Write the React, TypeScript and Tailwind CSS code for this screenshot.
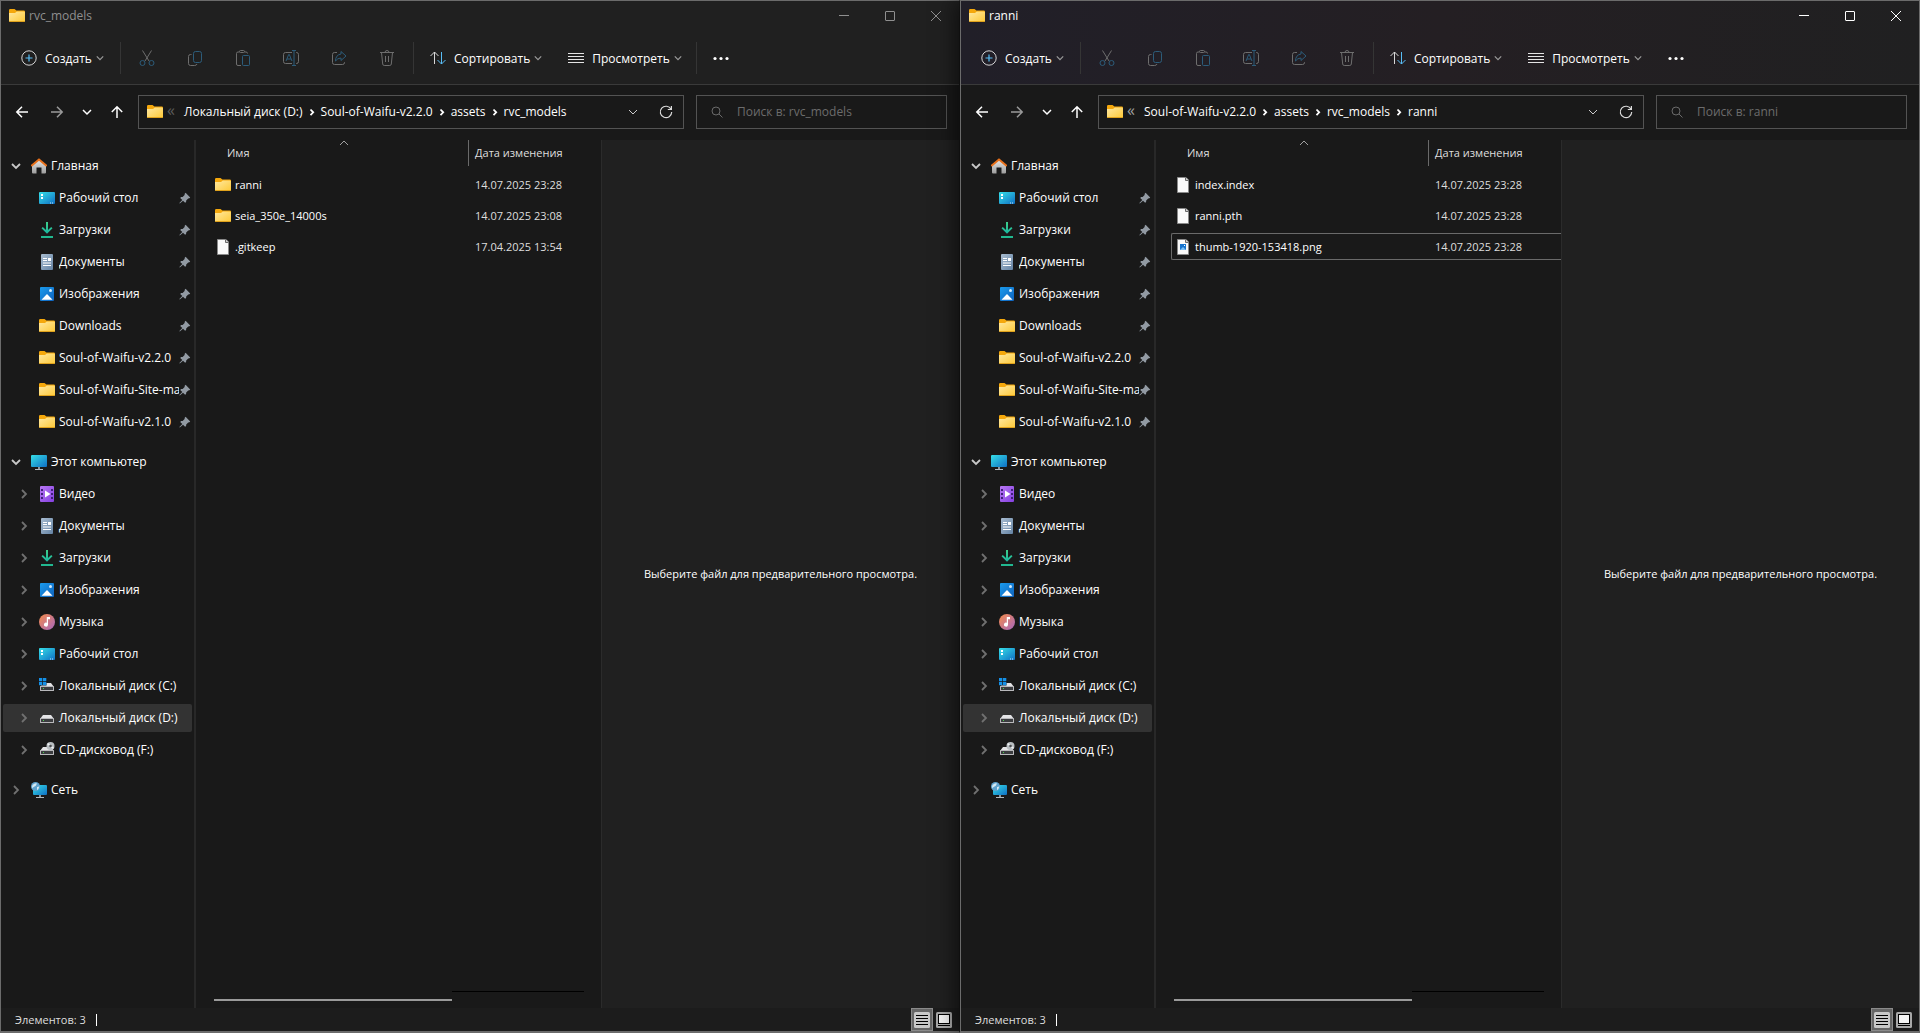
import React from 'react';

interface IconProps {
  className?: string;
}

interface FileEntry {
  name: string;
  date: string;
  kind: 'folder' | 'file' | 'image';
  focused?: boolean;
}

interface NavEntry {
  label: string;
  icon: React.FC<IconProps>;
  selected?: boolean;
}

interface ExplorerProps {
  id: string;
  title: string;
  path: string[];
  files: FileEntry[];
  active?: boolean;
}

// Shared gradients, referenced by the icons below
const IconDefs: React.FC = () => (
  <svg className="absolute h-0 w-0" aria-hidden="true">
    <defs>
      <linearGradient id="g-folder" x1="0" y1="0" x2="1" y2="1">
        <stop offset="0" stopColor="#ffe9a2" />
        <stop offset="1" stopColor="#fdc937" />
      </linearGradient>
      <linearGradient id="g-screen" x1="0" y1="0" x2="1" y2="1">
        <stop offset="0" stopColor="#36dfe8" />
        <stop offset="1" stopColor="#0f6fc4" />
      </linearGradient>
      <linearGradient id="g-home" x1="0" y1="0" x2="0" y2="1">
        <stop offset="0" stopColor="#e8e8e8" />
        <stop offset="1" stopColor="#9c9c9c" />
      </linearGradient>
      <linearGradient id="g-down" x1="0" y1="0" x2="0" y2="1">
        <stop offset="0" stopColor="#3fd08a" />
        <stop offset="1" stopColor="#17b3a0" />
      </linearGradient>
      <linearGradient id="g-doc" x1="0" y1="0" x2="1" y2="1">
        <stop offset="0" stopColor="#a9bdd1" />
        <stop offset="1" stopColor="#6483a4" />
      </linearGradient>
      <linearGradient id="g-image" x1="0" y1="0" x2="1" y2="1">
        <stop offset="0" stopColor="#1a9bee" />
        <stop offset="1" stopColor="#0f62bd" />
      </linearGradient>
      <linearGradient id="g-video" x1="0" y1="0" x2="1" y2="1">
        <stop offset="0" stopColor="#b877f5" />
        <stop offset="1" stopColor="#8440e0" />
      </linearGradient>
      <linearGradient id="g-music" x1="0" y1="0" x2="1" y2="1">
        <stop offset="0" stopColor="#f58c4a" />
        <stop offset="1" stopColor="#a566c0" />
      </linearGradient>
    </defs>
  </svg>
);

const FolderIcon: React.FC<IconProps> = ({ className }) => (
  <svg viewBox="0 0 16 16" className={`h-4 w-4 shrink-0 ${className || ''}`}>
    <path d="M0 2.2Q0 1 1.2 1h4.3L7.4 2.4h7.4Q16 2.4 16 3.6V8H0z" fill="#f5a80c" />
    <path d="M0 5h6l1.8-1.6h7Q16 3.400 16 4.600v8.200q0 1.200-1.200 1.200H1.200Q0 14 0 12.800z" fill="url(#g-folder)" />
    <path d="M.3 13.500h15.400" stroke="#e0a21c" strokeWidth="1" />
  </svg>
);

const HomeIcon: React.FC<IconProps> = () => (
  <svg viewBox="0 0 16 16" className="h-4 w-4 shrink-0">
    <path d="M1 7l7-5.500L15 7v7.500q0 1-1 1h-3.500V9.500h-5v6H2q-1 0-1-1z" fill="url(#g-home)" />
    <path d="M.8 7.400L8 1.400l7.200 6" stroke="#e8701a" strokeWidth="2" fill="none" strokeLinecap="round" strokeLinejoin="round" />
  </svg>
);

const DesktopIcon: React.FC<IconProps> = () => (
  <svg viewBox="0 0 16 16" className="h-4 w-4 shrink-0">
    <rect x="0" y="2" width="16" height="12" rx="1" fill="url(#g-screen)" />
    <path d="M2 4h2v2H2zM2 7h2v2H2z" fill="#fff" />
    <path d="M11 12.500h1v1h-1zM13 12.500h1v1h-1z" fill="#c9e6fa" />
  </svg>
);

const DownloadIcon: React.FC<IconProps> = () => (
  <svg viewBox="0 0 16 16" className="h-4 w-4 shrink-0">
    <path d="M7 0h2v8l3.200-3 1.300 1.300L8 11.800 2.500 6.300 3.800 5 7 8z" fill="url(#g-down)" />
    <path d="M2 14h12v2H2z" fill="#21b890" />
  </svg>
);

const DocumentIcon: React.FC<IconProps> = () => (
  <svg viewBox="0 0 16 16" className="h-4 w-4 shrink-0">
    <rect x="2" y="0" width="12" height="16" rx="1" fill="url(#g-doc)" />
    <path d="M4 4.500h4M4 6.500h4M4 9h8M4 11.500h8" stroke="#fff" />
    <path d="M9 4h3v3H9z" fill="#fff" />
  </svg>
);

const PicturesIcon: React.FC<IconProps> = () => (
  <svg viewBox="0 0 16 16" className="h-4 w-4 shrink-0">
    <rect x="1" y="1" width="14" height="14" rx="1" fill="url(#g-image)" />
    <path d="M2.500 13.800L8 8l5.500 5.800z" fill="#fff" />
    <circle cx="11.500" cy="4.500" r="1.500" fill="#d5ebfb" />
  </svg>
);

const MonitorIcon: React.FC<IconProps> = () => (
  <svg viewBox="0 0 16 16" className="h-4 w-4 shrink-0">
    <rect x="0" y="1" width="16" height="12" rx="1" fill="url(#g-screen)" />
    <path d="M7 13h2v2H7z" fill="#8b9299" />
    <path d="M4 15h8v1H4z" fill="#b4babf" />
  </svg>
);

const VideoIcon: React.FC<IconProps> = () => (
  <svg viewBox="0 0 16 16" className="h-4 w-4 shrink-0">
    <rect x="1" y="0" width="14" height="16" rx="1" fill="url(#g-video)" />
    <path d="M2 3h2v2H2zM2 7h2v2H2zM2 11h2v2H2zM12 3h2v2h-2zM12 7h2v2h-2zM12 11h2v2h-2z" fill="#40207a" />
    <path d="M6 4.500L11.500 8 6 11.500z" fill="#fff" />
  </svg>
);

const MusicIcon: React.FC<IconProps> = () => (
  <svg viewBox="0 0 16 16" className="h-4 w-4 shrink-0">
    <circle cx="8" cy="8" r="8" fill="url(#g-music)" />
    <path d="M7.800 3H11v2.300H9v5.400a2 2 0 1 1-1.200-1.900z" fill="#fff" />
  </svg>
);

const DriveBody: React.FC = () => (
  <>
    <path d="M4 5h8l3 4H1z" fill="#e4e4e6" />
    <rect x="1" y="8" width="14" height="5" rx=".6" fill="#b9b9bc" />
    <rect x="2" y="9" width="12" height="3" fill="#3c3d40" />
    <path d="M4 10h1v1H4z" fill="#4ccf4f" />
  </>
);

const SystemDriveIcon: React.FC<IconProps> = () => (
  <svg viewBox="0 0 16 16" className="h-4 w-4 shrink-0">
    <DriveBody />
    <path d="M-.5-.5h8v8h-8z" fill="#191919" />
    <path d="M0 0h3.300v3.300H0zM4 0h3.300v3.300H4zM0 4h3.300v3.300H0zM4 4h3.300v3.300H4z" fill="#1590e6" />
  </svg>
);

const DriveIcon: React.FC<IconProps> = () => (
  <svg viewBox="0 0 16 16" className="h-4 w-4 shrink-0">
    <DriveBody />
  </svg>
);

const CdDriveIcon: React.FC<IconProps> = () => (
  <svg viewBox="0 0 16 16" className="h-4 w-4 shrink-0">
    <DriveBody />
    <circle cx="11.500" cy="4" r="4" fill="#b9bec2" />
    <path d="M11.500 4L8.600 1.600M11.500 4l3 2.400" stroke="#eef1f3" strokeWidth="1.500" />
    <circle cx="11.500" cy="4" r="1.300" fill="#4a4d50" />
  </svg>
);

const NetworkIcon: React.FC<IconProps> = () => (
  <svg viewBox="0 0 16 16" className="h-4 w-4 shrink-0">
    <rect x="2" y="3" width="14" height="10" rx="1" fill="url(#g-screen)" />
    <path d="M8 13h2v2H8z" fill="#8b9299" />
    <path d="M5 15h8v1H5z" fill="#b4babf" />
    <circle cx="4.500" cy="4.500" r="4.500" fill="#5fa3cf" />
    <path d="M1.500 3Q4 .5 6 1.500 5 4 3.500 4.500q-1.500.5-2 2Q.5 5 1.500 3zM6 5l2.300-.5Q8 7 6 8.300z" fill="#d4e8f3" />
  </svg>
);

const FileIcon: React.FC<IconProps> = () => (
  <svg viewBox="0 0 16 16" className="h-4 w-4 shrink-0">
    <path d="M2.500.5H11L13.500 3v12.500h-11z" fill="#fafafa" stroke="#8a8a8a" />
    <path d="M10.500.5V3.500h3" fill="#d0d0d0" stroke="#6a6a6a" />
  </svg>
);

const ImageFileIcon: React.FC<IconProps> = () => (
  <svg viewBox="0 0 16 16" className="h-4 w-4 shrink-0">
    <path d="M2.500.5H11L13.500 3v12.500h-11z" fill="#fafafa" stroke="#8a8a8a" />
    <path d="M10.500.5V3.500h3" fill="#d0d0d0" stroke="#6a6a6a" />
    <path d="M5 5h6v6H5z" fill="#1674cf" />
    <path d="M5 11l3-3 3 3z" fill="#7cc0f5" />
    <path d="M9 6h1v1H9z" fill="#fff" />
  </svg>
);

const PinIcon: React.FC<IconProps> = () => (
  <svg viewBox="0 0 12 12" className="h-3 w-3 shrink-0" fill="#929aa3">
    <path d="M6.600.8l4.600 4.600-.8.900-1.200.1-2 2.100-.1 1.500-1 .8L4 8.700.8 11.500l-.400-.400 2.900-3.200-2.100-2 .9-.9 1.500-.1 2-2 .1-1.200z" />
  </svg>
);

const ChevronIcon: React.FC<IconProps & { dir: 'down' | 'right' | 'up'; width?: number }> = ({ className, dir, width = 1 }) => {
  const paths = { down: 'M1 3l4 4 4-4', right: 'M3 1l4 4-4 4', up: 'M1 7l4-4 4 4' };
  return (
    <svg viewBox="0 0 10 10" className={`shrink-0 ${className || ''}`} fill="none" stroke="currentColor" strokeWidth={width}>
      <path d={paths[dir]} />
    </svg>
  );
};

const ArrowIcon: React.FC<IconProps & { dir: 'left' | 'right' | 'up' }> = ({ className, dir }) => {
  const paths = {
    left: 'M13 7H2M7 1.800L1.800 7 7 12.200',
    right: 'M1 7h11M7 1.800L12.200 7 7 12.200',
    up: 'M7 13V2M1.800 7L7 1.800 12.200 7',
  };
  return (
    <svg viewBox="0 0 14 14" className={`h-3.5 w-3.5 ${className || ''}`} fill="none" stroke="currentColor" strokeWidth="1.500">
      <path d={paths[dir]} />
    </svg>
  );
};

// Toolbar commands; all of them are greyed out while nothing is selected
const TOOLS: { label: string; icon: React.ReactNode }[] = [
  {
    label: 'Вырезать',
    icon: (
      <>
        <path d="M3.500.5l6.500 10.500M12.500.5L6 11" stroke="#6e6e6e" />
        <circle cx="3.500" cy="13" r="2.500" stroke="#2c5c7a" />
        <circle cx="12.500" cy="13" r="2.500" stroke="#2c5c7a" />
      </>
    ),
  },
  {
    label: 'Копировать',
    icon: (
      <>
        <path d="M4.500 4.500h-1q-2 0-2 2v7q0 2 2 2h4q2 0 2.500-1.500" stroke="#6e6e6e" />
        <rect x="6.500" y="1.500" width="8" height="11" rx="2" stroke="#2c5c7a" />
      </>
    ),
  },
  {
    label: 'Вставить',
    icon: (
      <>
        <path d="M6 15.500H3q-1.500 0-1.500-1.500V3.500Q1.500 2 3 2h1.500M9.500 2H11q1.500 0 1.500 1.500" stroke="#6e6e6e" />
        <rect x="4.500" y=".5" width="5" height="2" rx="1" stroke="#6e6e6e" />
        <rect x="7.500" y="5.500" width="7" height="10" rx="1" stroke="#2c5c7a" />
      </>
    ),
  },
  {
    label: 'Переименовать',
    icon: (
      <>
        <path d="M9 2.500H2.500q-2 0-2 2v7q0 2 2 2H9M13 2.500h.5q2 0 2 2v7q0 2-2 2H13" stroke="#6e6e6e" />
        <path d="M3 11l2.700-6.500h.600L9 11M4 9h4M9 .5h4M9 15.500h4M11 .5v15" stroke="#2c5c7a" />
      </>
    ),
  },
  {
    label: 'Поделиться',
    icon: (
      <>
        <path d="M6 2.500H3.500q-2 0-2 2v8q0 2 2 2h8q2 0 2-2V12" stroke="#6e6e6e" />
        <path d="M10 1.500L15 6l-5 4.500V8Q6.500 8 4.500 11 4.500 5 10 4z" stroke="#2c5c7a" />
      </>
    ),
  },
  {
    label: 'Удалить',
    icon: (
      <path d="M1 2.500h14M6 2.500Q6 .5 8 .5t2 2M2.500 2.500l1.200 11.500q.2 1.500 1.500 1.500h5.600q1.300 0 1.500-1.500L13.500 2.500M6.500 6v6M9.500 6v6" stroke="#6e6e6e" />
    ),
  },
];

const QUICK_ACCESS: NavEntry[] = [
  { label: 'Рабочий стол', icon: DesktopIcon },
  { label: 'Загрузки', icon: DownloadIcon },
  { label: 'Документы', icon: DocumentIcon },
  { label: 'Изображения', icon: PicturesIcon },
  { label: 'Downloads', icon: FolderIcon },
  { label: 'Soul-of-Waifu-v2.2.0', icon: FolderIcon },
  { label: 'Soul-of-Waifu-Site-ma', icon: FolderIcon },
  { label: 'Soul-of-Waifu-v2.1.0', icon: FolderIcon },
];

const THIS_PC: NavEntry[] = [
  { label: 'Видео', icon: VideoIcon },
  { label: 'Документы', icon: DocumentIcon },
  { label: 'Загрузки', icon: DownloadIcon },
  { label: 'Изображения', icon: PicturesIcon },
  { label: 'Музыка', icon: MusicIcon },
  { label: 'Рабочий стол', icon: DesktopIcon },
  { label: 'Локальный диск (C:)', icon: SystemDriveIcon },
  { label: 'Локальный диск (D:)', icon: DriveIcon, selected: true },
  { label: 'CD-дисковод (F:)', icon: CdDriveIcon },
];

const TitleBar: React.FC<{ title: string; active?: boolean }> = ({ title, active }) => (
  <div className={`flex h-[30px] items-center pl-2 ${active ? 'text-white' : 'text-[#8f8f8f]'}`}>
    <FolderIcon />
    <h1 className="ml-1 flex-1">{title}</h1>
    <button aria-label="Свернуть" className="flex h-full w-[46px] items-center justify-center">
      <svg viewBox="0 0 10 10" className="h-2.5 w-2.5" stroke="currentColor"><path d="M0 4.500h10" /></svg>
    </button>
    <button aria-label="Развернуть" className="flex h-full w-[46px] items-center justify-center">
      <svg viewBox="0 0 10 10" className="h-2.5 w-2.5" stroke="currentColor" fill="none"><rect x=".5" y=".5" width="9" height="9" rx=".5" /></svg>
    </button>
    <button aria-label="Закрыть" className="flex h-full w-[46px] items-center justify-center">
      <svg viewBox="0 0 10 10" className="h-2.5 w-2.5" stroke="currentColor"><path d="M0 0l10 10M10 0L0 10" /></svg>
    </button>
  </div>
);

const Toolbar: React.FC<{ active?: boolean }> = ({ active }) => (
  <div className="flex h-[53px] items-center pt-px pl-5 text-white">
    <button className="flex w-[99px] items-center">
      <svg viewBox="0 0 16 16" className="h-4 w-4" fill="none">
        <circle cx="8" cy="8" r="7.200" stroke="#d4d4d4" />
        <path d="M8 4.500v7M4.500 8h7" stroke="#58bdf5" strokeWidth="1.200" />
      </svg>
      <span className="mr-1 ml-2 pt-0.5">Создать</span>
      <ChevronIcon dir="down" className="h-2 w-2 text-[#9a9a9a]" width={1.5} />
    </button>
    <div className="flex h-8 items-center gap-8 border-x border-[#353535] px-[18px]">
      {TOOLS.map(tool => (
        <button key={tool.label} aria-label={tool.label} disabled>
          <svg viewBox="0 0 16 16" className="h-4 w-4" fill="none">{tool.icon}</svg>
        </button>
      ))}
    </div>
    <button className="ml-4 flex items-center">
      <svg viewBox="0 0 16 16" className="h-4 w-4" fill="none">
        <path d="M4.500 14V2M.5 6l4-4 4 4" stroke="#d8d8d8" />
        <path d="M11.500 2v12M7.500 10l4 4 4-4" stroke="#58bdf5" />
      </svg>
      <span className="mr-1 ml-2 pt-0.5">Сортировать</span>
      <ChevronIcon dir="down" className="h-2 w-2 text-[#9a9a9a]" width={1.5} />
    </button>
    <button className="ml-[26px] flex items-center">
      <svg viewBox="0 0 16 16" className="h-4 w-4" stroke="#e4e4e4">
        <path d="M0 3.500h16M0 6.500h16M0 9.500h16M0 12.500h16" />
      </svg>
      <span className="mr-1 ml-2 pt-0.5">Просмотреть</span>
      <ChevronIcon dir="down" className="h-2 w-2 text-[#9a9a9a]" width={1.5} />
    </button>
    {!active && <div className="ml-3.5 h-8 w-px bg-[#353535]" />}
    <button aria-label="Подробнее" className={active ? 'ml-[26px]' : 'ml-4'}>
      <svg viewBox="0 0 16 16" className="h-4 w-4" fill="#fff">
        <circle cx="2" cy="8.500" r="1.600" />
        <circle cx="8" cy="8.500" r="1.600" />
        <circle cx="14" cy="8.500" r="1.600" />
      </svg>
    </button>
  </div>
);

const AddressBar: React.FC<{ id: string; title: string; path: string[]; active?: boolean }> = ({ id, title, path, active }) => (
  <div className="flex items-center pt-2.5 pr-3 pb-[11px] pl-3.5 text-white">
    <button aria-label="Назад"><ArrowIcon dir="left" /></button>
    <button aria-label="Вперёд" className="ml-[21px] text-[#9a9a9a]"><ArrowIcon dir="right" /></button>
    <button aria-label="Последние расположения" className="ml-[18px]"><ChevronIcon dir="down" className="h-2.5 w-2.5" width={1.5} /></button>
    <button aria-label="Вверх" className="ml-[18px]"><ArrowIcon dir="up" /></button>
    <div className="ml-3.5 flex h-[34px] flex-1 items-center border border-[#535353] pr-2.5 pl-2">
      <FolderIcon />
      <span className={`ml-1 w-[17px] pb-1 text-[16px] ${active ? 'text-[#a0a0a0]' : 'text-[#5c5c5c]'}`}>«</span>
      <nav className="flex flex-1 items-center">
        {path.map((part, i) => (
          <React.Fragment key={part}>
            {i > 0 && (
              <svg viewBox="0 0 10 10" className="mx-1 h-2.5 w-2.5 shrink-0" fill="none" stroke="currentColor" strokeWidth="1.800">
                <path d="M3.500 2.500L6.200 5.300 3.500 8.100" />
              </svg>
            )}
            <a href="#" className="whitespace-nowrap">{part}</a>
          </React.Fragment>
        ))}
      </nav>
      <button aria-label="Предыдущие расположения"><ChevronIcon dir="down" className="h-2.5 w-2.5 text-[#cccccc]" /></button>
      <button aria-label="Обновить" className="ml-[21px]">
        <svg viewBox="0 0 14 14" className="h-3.5 w-3.5" fill="none" stroke="#dcdcdc" strokeWidth="1.200">
          <path d="M12 4.200A5.700 5.700 0 1 0 12.700 7M12.400 1v3.500H8.800" />
        </svg>
      </button>
    </div>
    <div className="ml-3 flex h-[34px] w-[251px] items-center border border-[#535353] pl-3.5">
      <svg viewBox="0 0 12 12" className="h-3 w-3 shrink-0" fill="none" stroke="#6a6a6a">
        <circle cx="5" cy="5" r="4" />
        <path d="M8 8l3.500 3.500" />
      </svg>
      <input
        id={`search-${id}`}
        type="text"
        aria-label="Поиск"
        placeholder={`Поиск в: ${title}`}
        className="ml-3.5 w-full bg-transparent outline-none placeholder:text-[#6c6c6c]"
      />
    </div>
  </div>
);

const RootItem: React.FC<{ label: string; icon: React.FC<IconProps>; open?: boolean }> = ({ label, icon: Icon, open }) => (
  <a href="#" className="flex h-7 items-center pl-2">
    <ChevronIcon
      dir={open ? 'down' : 'right'}
      className={open ? 'mr-2.5 h-2.5 w-2.5 text-[#c8c8c8]' : 'mr-2.5 h-2.5 w-2.5 text-[#707070]'}
      width={1.8}
    />
    <Icon />
    <span className="ml-1">{label}</span>
  </a>
);

const Sidebar: React.FC = () => (
  <aside className="flex w-[195px] shrink-0 flex-col gap-3 border-r-2 border-[#282828] py-3 pr-0.5 pl-0.5 text-white">
    <div className="flex flex-col gap-1">
      <RootItem label="Главная" icon={HomeIcon} open />
      {QUICK_ACCESS.map(({ label, icon: Icon }) => (
        <a key={label} href="#" className="flex h-7 items-center pr-px pl-9">
          <Icon />
          <span className="ml-1 flex-1 overflow-hidden whitespace-nowrap">{label}</span>
          <PinIcon />
        </a>
      ))}
    </div>
    <div className="flex flex-col gap-1">
      <RootItem label="Этот компьютер" icon={MonitorIcon} open />
      {THIS_PC.map(({ label, icon: Icon, selected }) => (
        <a key={label} href="#" className={`flex h-7 items-center rounded-xs pl-4 ${selected ? 'bg-[#333333]' : ''}`}>
          <ChevronIcon dir="right" className="mr-2.5 h-2.5 w-2.5 text-[#707070]" width={1.8} />
          <Icon />
          <span className="ml-1">{label}</span>
        </a>
      ))}
    </div>
    <RootItem label="Сеть" icon={NetworkIcon} />
  </aside>
);

const FileTable: React.FC<{ files: FileEntry[] }> = ({ files }) => (
  <table className="w-full table-fixed border-collapse text-left">
    <thead>
      <tr className="h-[29px] align-top font-normal text-[#dedede]">
        <th className="w-[258px] p-0 font-normal">
          <div className="relative ml-2.5 flex h-[26px] items-center border-r border-[#6a6a6a] pl-1.5">
            Имя
            <ChevronIcon dir="up" className="absolute -top-0.5 left-1/2 -ml-1.5 h-2.5 w-2.5 text-[#a0a0a0]" />
          </div>
        </th>
        <th className="p-0 font-normal">
          <div className="flex h-[26px] items-center pl-1.5">Дата изменения</div>
        </th>
      </tr>
    </thead>
    <tbody>
      {files.map(file => {
        const border = file.focused ? 'border-[#6a6a6a]' : 'border-transparent';
        return (
          <tr key={file.name} className="h-[31px]">
            <td className="p-0">
              <div className={`flex h-[27px] items-center rounded-l-xs border-y border-l pl-[3px] text-white ${border}`}>
                {file.kind === 'folder' && <FolderIcon />}
                {file.kind === 'file' && <FileIcon />}
                {file.kind === 'image' && <ImageFileIcon />}
                <span className="ml-1">{file.name}</span>
              </div>
            </td>
            <td className="p-0">
              <div className={`flex h-[27px] items-center border-y pl-1.5 text-[#dedede] ${border}`}>{file.date}</div>
            </td>
          </tr>
        );
      })}
    </tbody>
  </table>
);

const StatusBar: React.FC<{ count: number }> = ({ count }) => (
  <div className="flex h-[23px] items-center bg-[#1c1c1c] pr-[7px] pl-3.5 text-[11px] text-[#dedede]">
    <span className="border-r border-white pr-2.5 leading-3">Элементов: {count}</span>
    <button aria-label="Таблица" className="ml-auto flex h-[23px] w-[22px] items-center justify-center border border-[#8a8a8a] bg-[#666666]">
      <svg viewBox="0 0 16 16" className="h-4 w-4">
        <rect width="16" height="16" rx="1.500" fill="#c8c8c8" />
        <path d="M2 3.500h12M2 6.500h12M2 9.500h12M2 12.500h12" stroke="#000" />
      </svg>
    </button>
    <button aria-label="Крупные значки" className="ml-[3px]">
      <svg viewBox="0 0 16 16" className="h-4 w-4">
        <rect width="16" height="16" rx="1.500" fill="#a8a8a8" />
        <rect x="2.500" y="2.500" width="11" height="9" fill="#f4f4f4" stroke="#000" />
        <path d="M2 13.500h12" stroke="#000" />
      </svg>
    </button>
  </div>
);

const ExplorerWindow: React.FC<ExplorerProps> = ({ id, title, path, files, active }) => (
  <section
    className={`flex min-w-0 flex-1 flex-col border-t border-r border-b-2 border-l border-[#6b6b6b] bg-[#191919] ${
      active ? 'relative shadow-[-4px_0_20px_rgba(0,0,0,0.6)]' : 'border-r-[#191919]'
    }`}
  >
    <header
      className={`border-b border-[#3a3a3a] ${
        active ? 'bg-linear-to-r from-[#211f28] via-[#241f23] to-[#202021]' : 'bg-[#202020]'
      }`}
    >
      <TitleBar title={title} active={active} />
      <Toolbar active={active} />
    </header>
    <AddressBar id={id} title={title} path={path} active={active} />
    <div className="flex flex-1">
      <Sidebar />
      <main className="flex w-[405px] shrink-0 flex-col pl-[15px] text-[11px]">
        <FileTable files={files} />
        <div className="mt-auto flex h-[17px] items-start pr-[17px] pl-[3px]">
          <div className="mt-2 h-0.5 w-[238px] bg-[#9a9a9a]" />
          <div className="h-px flex-1 bg-black" />
        </div>
      </main>
      <aside className="flex flex-1 items-center justify-center border-l border-[#2b2b2b] bg-[#202020] text-[11px] text-white">
        Выберите файл для предварительного просмотра.
      </aside>
    </div>
    <StatusBar count={files.length} />
  </section>
);

const App: React.FC = () => (
  <div className="flex min-h-screen bg-[#191919] font-['Open_Sans','Noto_Sans',sans-serif] text-[12px] leading-4">
    <IconDefs />
    <ExplorerWindow
      id="models"
      title="rvc_models"
      path={['Локальный диск (D:)', 'Soul-of-Waifu-v2.2.0', 'assets', 'rvc_models']}
      files={[
        { name: 'ranni', date: '14.07.2025 23:28', kind: 'folder' },
        { name: 'seia_350e_14000s', date: '14.07.2025 23:08', kind: 'folder' },
        { name: '.gitkeep', date: '17.04.2025 13:54', kind: 'file' },
      ]}
    />
    <ExplorerWindow
      id="ranni"
      title="ranni"
      path={['Soul-of-Waifu-v2.2.0', 'assets', 'rvc_models', 'ranni']}
      files={[
        { name: 'index.index', date: '14.07.2025 23:28', kind: 'file' },
        { name: 'ranni.pth', date: '14.07.2025 23:28', kind: 'file' },
        { name: 'thumb-1920-153418.png', date: '14.07.2025 23:28', kind: 'image', focused: true },
      ]}
      active
    />
  </div>
);

export default App;
